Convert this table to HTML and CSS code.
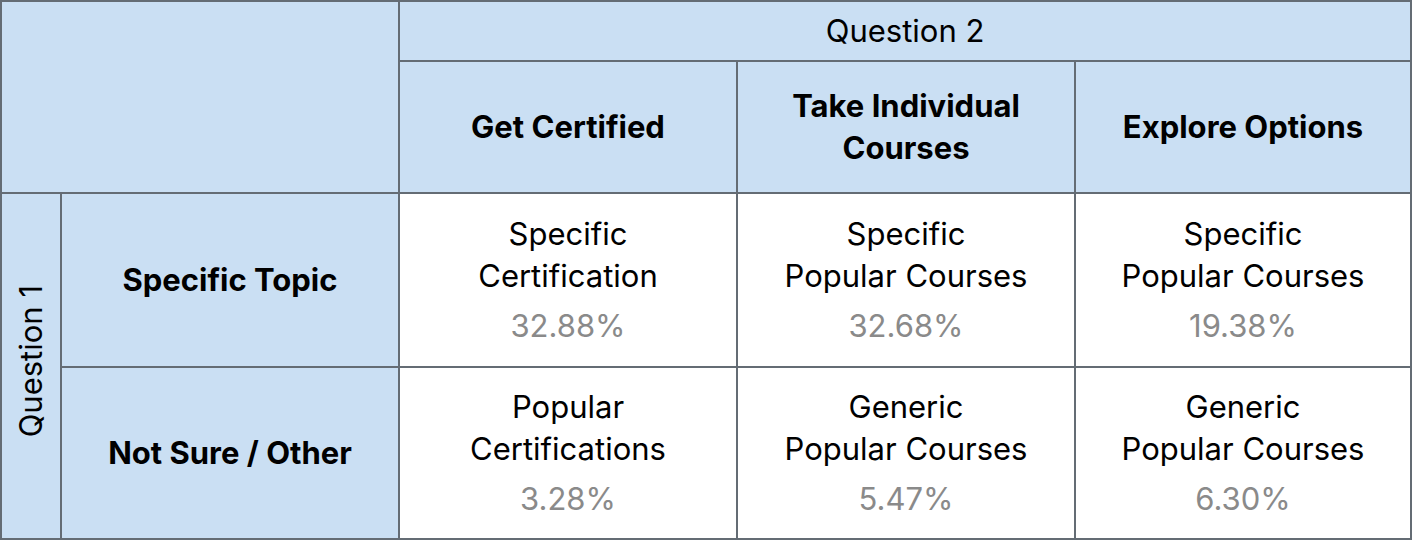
FILE: index.html
```html
<!DOCTYPE html>
<html lang="en">
<head>
<meta charset="utf-8">
<title>Question matrix</title>
<link rel="stylesheet" href="styles.css">
</head>
<body>
<table class="matrix">
  <colgroup>
    <col class="c-q">
    <col class="c-label">
    <col class="c-data">
    <col class="c-data">
    <col class="c-last">
  </colgroup>
  <tr class="r-top">
    <td class="hd" colspan="2" rowspan="2"></td>
    <td class="hd q2" colspan="3">Question 2</td>
  </tr>
  <tr class="r-head">
    <td class="hd strong">Get Certified</td>
    <td class="hd strong">Take Individual<br>Courses</td>
    <td class="hd strong">Explore Options</td>
  </tr>
  <tr class="r-one">
    <td class="hd q1" rowspan="2"><span class="vert">Question 1</span></td>
    <td class="hd strong">Specific Topic</td>
    <td class="cell"><div class="name">Specific<br>Certification</div><div class="pct">32.88%</div></td>
    <td class="cell"><div class="name">Specific<br>Popular Courses</div><div class="pct">32.68%</div></td>
    <td class="cell"><div class="name">Specific<br>Popular Courses</div><div class="pct">19.38%</div></td>
  </tr>
  <tr class="r-two">
    <td class="hd strong">Not Sure / Other</td>
    <td class="cell"><div class="name">Popular<br>Certifications</div><div class="pct">3.28%</div></td>
    <td class="cell"><div class="name">Generic<br>Popular Courses</div><div class="pct">5.47%</div></td>
    <td class="cell"><div class="name">Generic<br>Popular Courses</div><div class="pct">6.30%</div></td>
  </tr>
</table>
</body>
</html>
```

FILE: styles.css
```css
html, body {
  margin: 0;
  padding: 0;
  background: #ffffff;
}

.matrix {
  border-collapse: collapse;
  table-layout: fixed;
  width: 1412px;
  font-family: "Inter", "Noto Sans", sans-serif;
  font-size: 31px;
  color: #000000;
}

.c-q { width: 60px; }
.c-label { width: 338px; }
.c-data { width: 338px; }
.c-last { width: 336px; }

.matrix td {
  border: 2px solid #646c74;
  padding: 0;
  text-align: center;
  vertical-align: middle;
  line-height: 42px;
  overflow: hidden;
}

.r-top { height: 60px; }
.r-head { height: 132px; }
.r-one { height: 174px; }
.r-two { height: 172px; }

.hd {
  background: #cadff3;
}

.q2 {
  font-weight: 400;
}

.strong {
  font-weight: 700;
}

.vert {
  display: inline-block;
  writing-mode: vertical-rl;
  transform: rotate(180deg);
  white-space: nowrap;
  line-height: 36px;
}

.cell {
  background: #ffffff;
}

.pct {
  color: #8a8a8a;
  margin-top: 8px;
}
```
